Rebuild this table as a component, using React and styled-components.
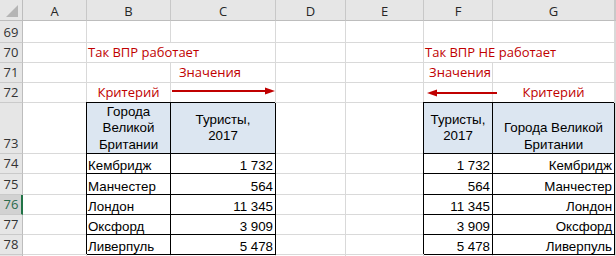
import React from 'react';
import styled, { createGlobalStyle } from 'styled-components';

const GlobalStyle = createGlobalStyle`
  html, body {
    margin: 0;
    padding: 0;
    background: #ffffff;
    overflow: hidden;
  }
`;

const COLUMN_NAMES = ['A', 'B', 'C', 'D', 'E', 'F', 'G', ''];

const RED = '#c00000';

const Sheet = styled.div`
  display: grid;
  grid-template-columns: 23px 64px 84px 105px 70px 78px 69px 122px 1fr;
  grid-template-rows: 21px 22px 20px 20px 20px 51px 20px 21px 20px 20px 20px 1fr;
  width: 616px;
  height: 256px;
  overflow: hidden;
  background: #ffffff;
  font-family: "Open Sans", "Noto Sans", sans-serif;
`;

const Corner = styled.div`
  background: #e6e6e6;
  border-right: 1px solid #bdbdbd;
  border-bottom: 1px solid #bdbdbd;
  display: flex;
  align-items: flex-end;
  justify-content: flex-end;
  padding: 0 4px 3px 0;
`;

const ColHeader = styled.div`
  background: #e6e6e6;
  border-right: 1px solid #c8c8c8;
  border-bottom: 1px solid #bdbdbd;
  color: #262626;
  font-size: 13px;
  display: flex;
  align-items: flex-end;
  justify-content: center;
`;

const RowHeader = styled.div`
  background: ${p => (p.$selected ? '#d2d2d2' : '#e6e6e6')};
  color: ${p => (p.$selected ? '#2b6a4d' : '#333333')};
  border-right: ${p => (p.$selected ? '2px solid #217346' : '1px solid #bdbdbd')};
  border-bottom: 1px solid #cacaca;
  font-size: 13px;
  display: flex;
  align-items: flex-end;
  justify-content: center;
  padding-bottom: 1px;
  padding-left: ${p => (p.$selected ? '1px' : '0')};
  overflow: hidden;
`;

const GridCell = styled.div`
  min-width: 0;
  display: flex;
  white-space: nowrap;
  border-right: 1px solid #d9d9d9;
  border-bottom: 1px solid #d9d9d9;
  grid-column: span ${p => p.$span || 1};
`;

const justify = { left: 'flex-start', center: 'center', right: 'flex-end' };

const Note = styled(GridCell)`
  color: ${RED};
  font-size: 13px;
  align-items: flex-end;
  justify-content: ${p => justify[p.$align || 'left']};
  padding: 0 ${p => p.$padRight || 0}px 1px ${p => p.$padLeft || 0}px;
`;

const ArrowCell = styled(GridCell)`
  align-items: flex-start;
`;

const ArrowSvg = styled.svg`
  display: block;
  flex-shrink: 0;
  margin-top: ${p => p.$top}px;
  margin-left: ${p => p.$left}px;
`;

const TableHead = styled(GridCell)`
  background: #dce6f1;
  border-right-color: #000000;
  border-bottom-color: #000000;
  box-shadow: -1px -1px 0 0 #000000;
  font-family: "Liberation Sans", Arial, sans-serif;
  font-size: 13.33px;
  line-height: 16.5px;
  color: #000000;
  white-space: normal;
  text-align: center;
  justify-content: center;
  align-items: ${p => (p.$valign === 'bottom' ? 'flex-end' : 'center')};
  padding: 0 2px;
`;

const TableCell = styled(GridCell)`
  border-right-color: #000000;
  border-bottom-color: #000000;
  box-shadow: -1px -1px 0 0 #000000;
  font-family: "Liberation Sans", Arial, sans-serif;
  font-size: 13.33px;
  color: #000000;
  align-items: flex-end;
  justify-content: ${p => justify[p.$align || 'left']};
  padding: 0 ${p => (p.$align === 'right' ? 2 : 0)}px 0 ${p => (p.$align === 'right' ? 0 : 1)}px;
`;

function Arrow({ direction, length, left, top }) {
  const head = 10;
  const right = direction === 'right';
  const x1 = right ? 0 : head - 1;
  const x2 = right ? length - head + 1 : length;
  const points = right
    ? `${length - head},1.6 ${length},5 ${length - head},8.4`
    : `${head},1.6 0,5 ${head},8.4`;
  return (
    <ArrowSvg width={length} height={10} $left={left} $top={top}>
      <line x1={x1} y1={5} x2={x2} y2={5} stroke={RED} strokeWidth={2} />
      <polygon points={points} fill={RED} />
    </ArrowSvg>
  );
}

const cities = [
  { city: 'Кембридж', tourists: '1 732' },
  { city: 'Манчестер', tourists: '564' },
  { city: 'Лондон', tourists: '11 345' },
  { city: 'Оксфорд', tourists: '3 909' },
  { city: 'Ливерпуль', tourists: '5 478' },
];

const SELECTED_ROW = 76;

const TouristsTitle = () => (
  <span>
    Туристы,
    <br />
    2017
  </span>
);

export default function App() {
  return (
    <>
      <GlobalStyle />
      <Sheet>
        <Corner>
          <svg width="12" height="12">
            <polygon points="12,0 12,12 0,12" fill="#b5b5b5" />
          </svg>
        </Corner>
        {COLUMN_NAMES.map((name, i) => (
          <ColHeader key={i}>{name}</ColHeader>
        ))}

        {/* 69 */}
        <RowHeader>69</RowHeader>
        {COLUMN_NAMES.map((_, i) => (
          <GridCell key={i} />
        ))}

        {/* 70 */}
        <RowHeader>70</RowHeader>
        <GridCell />
        <Note $span={2} $padLeft={1}>Так ВПР работает</Note>
        <GridCell />
        <GridCell />
        <Note $span={2} $padLeft={1}>Так ВПР НЕ работает</Note>
        <GridCell />

        {/* 71 */}
        <RowHeader>71</RowHeader>
        <GridCell />
        <GridCell />
        <Note $padLeft={8}>Значения</Note>
        <GridCell />
        <GridCell />
        <Note $align="right" $padRight={1}>Значения</Note>
        <GridCell />
        <GridCell />

        {/* 72 */}
        <RowHeader>72</RowHeader>
        <GridCell />
        <Note $align="center">Критерий</Note>
        <ArrowCell>
          <Arrow direction="right" length={103} left={1} top={3} />
        </ArrowCell>
        <GridCell />
        <GridCell />
        <ArrowCell>
          <Arrow direction="left" length={70} left={3} top={5} />
        </ArrowCell>
        <Note $align="center">Критерий</Note>
        <GridCell />

        {/* 73 */}
        <RowHeader>73</RowHeader>
        <GridCell />
        <TableHead $valign="bottom">Города Великой Британии</TableHead>
        <TableHead>
          <TouristsTitle />
        </TableHead>
        <GridCell />
        <GridCell />
        <TableHead>
          <TouristsTitle />
        </TableHead>
        <TableHead $valign="bottom">Города Великой Британии</TableHead>
        <GridCell />

        {cities.map((row, i) => {
          const n = 74 + i;
          return (
            <React.Fragment key={n}>
              <RowHeader $selected={n === SELECTED_ROW}>{n}</RowHeader>
              <GridCell />
              <TableCell>{row.city}</TableCell>
              <TableCell $align="right">{row.tourists}</TableCell>
              <GridCell />
              <GridCell />
              <TableCell $align="right">{row.tourists}</TableCell>
              <TableCell $align="right">{row.city}</TableCell>
              <GridCell />
            </React.Fragment>
          );
        })}

        {/* 79 */}
        <RowHeader />
        {COLUMN_NAMES.map((_, i) => (
          <GridCell key={i} />
        ))}
      </Sheet>
    </>
  );
}
